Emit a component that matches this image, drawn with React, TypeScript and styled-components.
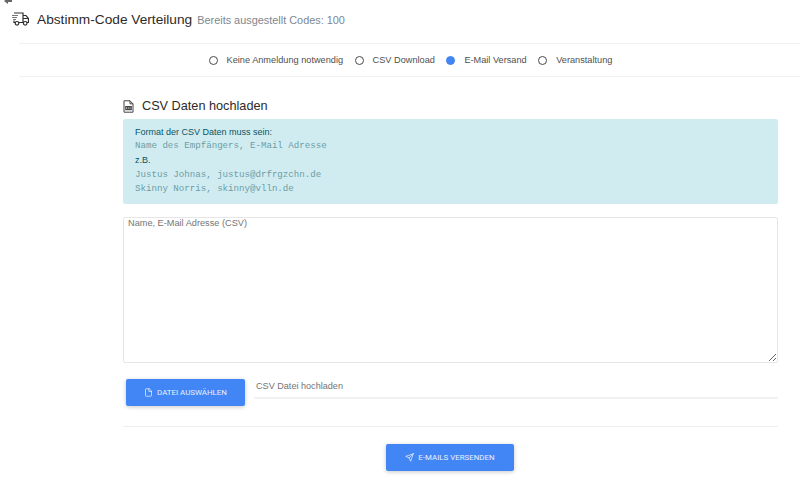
import React from 'react';
import styled, { createGlobalStyle } from 'styled-components';
import { FiFile, FiSend } from 'react-icons/fi';

const GlobalStyle = createGlobalStyle`
  html, body {
    margin: 0;
    padding: 0;
    background: #fff;
    overflow: hidden;
  }
  body {
    font-family: "Liberation Sans", Arial, sans-serif;
    color: #212529;
  }
`;

const Page = styled.div`
  position: relative;
  width: 800px;
  height: 481px;
  overflow: hidden;
`;

const BackGlyph = styled.svg`
  position: absolute;
  left: 4px;
  top: -2px;
`;

const Header = styled.header`
  display: flex;
  align-items: center;
  height: 43px;
  padding: 0 0 5px 12px;
  box-sizing: border-box;
`;

const Title = styled.h1`
  margin: 0 0 0 8px;
  font-size: 13.7px;
  font-weight: 400;
  color: #2b2b2b;
`;

const Muted = styled.small`
  margin-left: 5px;
  font-size: 10.9px;
  color: #7d8790;
`;

const RadioBar = styled.div`
  display: flex;
  justify-content: center;
  align-items: center;
  gap: 11.5px;
  height: 32px;
  margin-left: 19px;
  padding-left: 2px;
  border-top: 1px solid #f0f0f0;
  border-bottom: 1px solid #f0f0f0;
`;

const RadioItem = styled.label`
  display: flex;
  align-items: center;
  gap: 9px;
  font-size: 9.2px;
  color: #4f4f4f;
`;

const RadioDot = styled.span<{ $on?: boolean }>`
  width: 7px;
  height: 7px;
  border-radius: 50%;
  border: 1px solid ${p => (p.$on ? '#4285f4' : '#4a4a4a')};
  background: ${p => (p.$on ? '#4285f4' : '#fff')};
`;

const Content = styled.main`
  display: flex;
  flex-direction: column;
  margin: 0 22px 0 123px;
  padding-top: 20px;
`;

const SectionTitle = styled.h2`
  display: flex;
  align-items: center;
  gap: 8px;
  height: 18px;
  margin: 0 0 4px;
  font-size: 12.7px;
  font-weight: 400;
  color: #2b2b2b;
`;

const Alert = styled.div`
  height: 85px;
  box-sizing: border-box;
  padding: 6px 12px;
  border-radius: 2px;
  background: #d1ecf1;
  color: #0c5460;
  font-size: 9px;
  line-height: 14.2px;
`;

const Code = styled.div`
  font-family: "Liberation Mono", monospace;
  font-size: 9.15px;
  color: #6a9ea7;
`;

const CsvArea = styled.textarea`
  display: block;
  width: 100%;
  height: 146px;
  margin-top: 13px;
  padding: 0 4px;
  box-sizing: border-box;
  border: 1px solid #e6e6e6;
  border-radius: 2px;
  outline: none;
  font-family: "Liberation Sans", Arial, sans-serif;
  font-size: 9.2px;

  &::placeholder {
    color: #757575;
  }
`;

const FileRow = styled.div`
  display: flex;
  align-items: flex-start;
  margin-top: 16px;
  padding-left: 3px;
`;

const Button = styled.button<{ $width: number }>`
  display: flex;
  align-items: center;
  justify-content: center;
  gap: 4px;
  width: ${p => p.$width}px;
  height: 27px;
  padding: 0;
  border: 0;
  border-radius: 2px;
  background: #4285f4;
  color: #eaf1fe;
  font-family: Roboto, sans-serif;
  font-size: 7.9px;
  text-transform: uppercase;
  box-shadow: 0 1px 4px rgba(0, 0, 0, 0.22);
`;

const FileField = styled.div`
  flex: 1;
  height: 18px;
  margin-left: 9px;
  padding-left: 2px;
  border-bottom: 2px solid #f1f1f1;
  font-size: 9.1px;
  line-height: 15px;
  color: #757575;
`;

const Rule = styled.hr`
  width: 100%;
  margin: 20px 0 17px;
  border: 0;
  border-top: 1px solid #eee;
`;

const SendRow = styled.div`
  display: flex;
  justify-content: center;
  padding-right: 1px;
`;

const TruckIcon = () => (
  <svg width="17" height="14" viewBox="0 0 17 14" fill="none" stroke="#2e2e2e" strokeWidth="1.2">
    <path d="M2 1h9v9.5H7M3 10.5H2V8.5" />
    <path d="M0 3.5h6M0 5.5h5M1 7.5h3" stroke="#777" />
    <path d="M11 3.5h3l2.5 3v4H15M11 10.5h.5M11 6.5h5" />
    <circle cx="5" cy="11.3" r="1.8" />
    <circle cx="13.2" cy="11.3" r="1.8" />
  </svg>
);

const CsvIcon = () => (
  <svg width="11" height="13" viewBox="0 0 11 13" fill="none" stroke="#444" strokeWidth="1">
    <path d="M1 .8h6l3 3v8.4H1zM7 .8v3h3" />
    <rect x="2.2" y="6" width="6.6" height="4.2" fill="#444" stroke="none" />
    <path d="M3 8.1h5" stroke="#fff" strokeWidth="1" strokeDasharray="1 .8" />
  </svg>
);

const App: React.FC = () => {
  return (
    <Page>
      <GlobalStyle />
      <BackGlyph width="8" height="6" viewBox="0 0 8 6">
        <path d="M0 3l4-3v2h4v2H4v2z" fill="#666" />
      </BackGlyph>
      <Header>
        <TruckIcon />
        <Title>
          Abstimm-Code Verteilung<Muted>Bereits ausgestellt Codes: 100</Muted>
        </Title>
      </Header>
      <RadioBar>
        <RadioItem><RadioDot />Keine Anmeldung notwendig</RadioItem>
        <RadioItem><RadioDot />CSV Download</RadioItem>
        <RadioItem><RadioDot $on />E-Mail Versand</RadioItem>
        <RadioItem><RadioDot />Veranstaltung</RadioItem>
      </RadioBar>
      <Content>
        <SectionTitle><CsvIcon />CSV Daten hochladen</SectionTitle>
        <Alert>
          <div>Format der CSV Daten muss sein:</div>
          <Code>Name des Empfängers, E-Mail Adresse</Code>
          <div>z.B.</div>
          <Code>Justus Johnas, justus@drfrgzchn.de</Code>
          <Code>Skinny Norris, skinny@vlln.de</Code>
        </Alert>
        <CsvArea placeholder="Name, E-Mail Adresse (CSV)" />
        <FileRow>
          <Button $width={119}><FiFile size={9} />Datei auswählen</Button>
          <FileField>CSV Datei hochladen</FileField>
        </FileRow>
        <Rule />
        <SendRow>
          <Button $width={128}><FiSend size={9} />E-Mails versenden</Button>
        </SendRow>
      </Content>
    </Page>
  );
};

export default App;
